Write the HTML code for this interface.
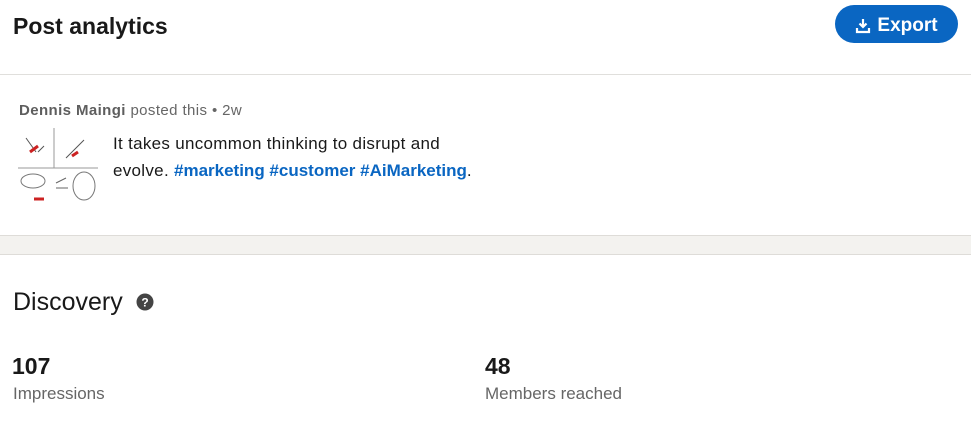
<!DOCTYPE html>
<html><head><meta charset="utf-8"><style>
*{margin:0;padding:0;box-sizing:border-box}
body{width:971px;height:431px;background:#fff;font-family:"Liberation Sans",sans-serif;color:#191919;position:relative;overflow:hidden}
.a{position:absolute}
</style></head><body>
<div class="a" style="left:13px;top:13px;font-size:23px;font-weight:600;color:#191919">Post analytics</div>
<div class="a" style="left:835px;top:5px;width:123px;height:38px;border-radius:19px;background:#0a66c2;color:#fff;font-size:19px;font-weight:bold;display:flex;align-items:center;justify-content:center;gap:6px;padding-top:3px">
<svg width="16" height="16" viewBox="0 0 16 16"><path d="M8 1v8M4.5 5.5 8 9l3.5-3.5M2 10v4h12v-4" stroke="#fff" stroke-width="2.2" fill="none"/></svg>Export</div>
<div class="a" style="left:0;top:74px;width:971px;height:1px;background:#e0dfdc"></div>
<div class="a" style="left:19px;top:102px;font-size:15px;letter-spacing:0.4px;color:#666">
<span style="font-weight:600;color:#5e5e5e">Dennis Maingi</span> posted this • 2w</div>
<svg class="a" style="left:18px;top:128px" width="80" height="78" viewBox="0 0 80 78">
<line x1="36" y1="0" x2="36" y2="40" stroke="#999"/><line x1="0" y1="40" x2="80" y2="40" stroke="#999"/>
<path d="M8 10l10 14M48 30l18-18M20 24l6-6" stroke="#555" fill="none"/>
<path d="M12 24l8-6M54 28l6-4" stroke="#c22" stroke-width="3"/>
<ellipse cx="15" cy="53" rx="12" ry="7" fill="none" stroke="#777"/>
<ellipse cx="66" cy="58" rx="11" ry="14" fill="none" stroke="#777"/>
<path d="M38 55l10-5M38 60l12 0" stroke="#666" fill="none"/>
<path d="M16 71h10" stroke="#c22" stroke-width="3"/>
</svg>
<div class="a" style="left:113px;top:130px;font-size:17px;letter-spacing:0.3px;line-height:27px;color:#191919">It takes uncommon thinking to disrupt and<br>evolve. <span style="color:#0a66c2;font-weight:bold;letter-spacing:0">#marketing #customer #AiMarketing</span>.</div>
<div class="a" style="left:0;top:235px;width:971px;height:20px;background:#f3f2ef;border-top:1px solid #dedcd8;border-bottom:1px solid #dedcd8"></div>
<div class="a" style="left:13px;top:288px;font-size:25px;color:#191919">Discovery</div>
<svg class="a" style="left:136px;top:293px" width="18" height="18" viewBox="0 0 18 18"><circle cx="9" cy="9" r="8.5" fill="#444"/><text x="9" y="13.5" font-family="Liberation Sans" font-weight="bold" font-size="12" fill="#fff" text-anchor="middle">?</text></svg>
<div class="a" style="left:12px;top:353px;font-size:23px;font-weight:600">107</div>
<div class="a" style="left:13px;top:384px;font-size:17px;color:#666">Impressions</div>
<div class="a" style="left:485px;top:353px;font-size:23px;font-weight:600">48</div>
<div class="a" style="left:485px;top:384px;font-size:17px;color:#666">Members reached</div>
</body></html>
